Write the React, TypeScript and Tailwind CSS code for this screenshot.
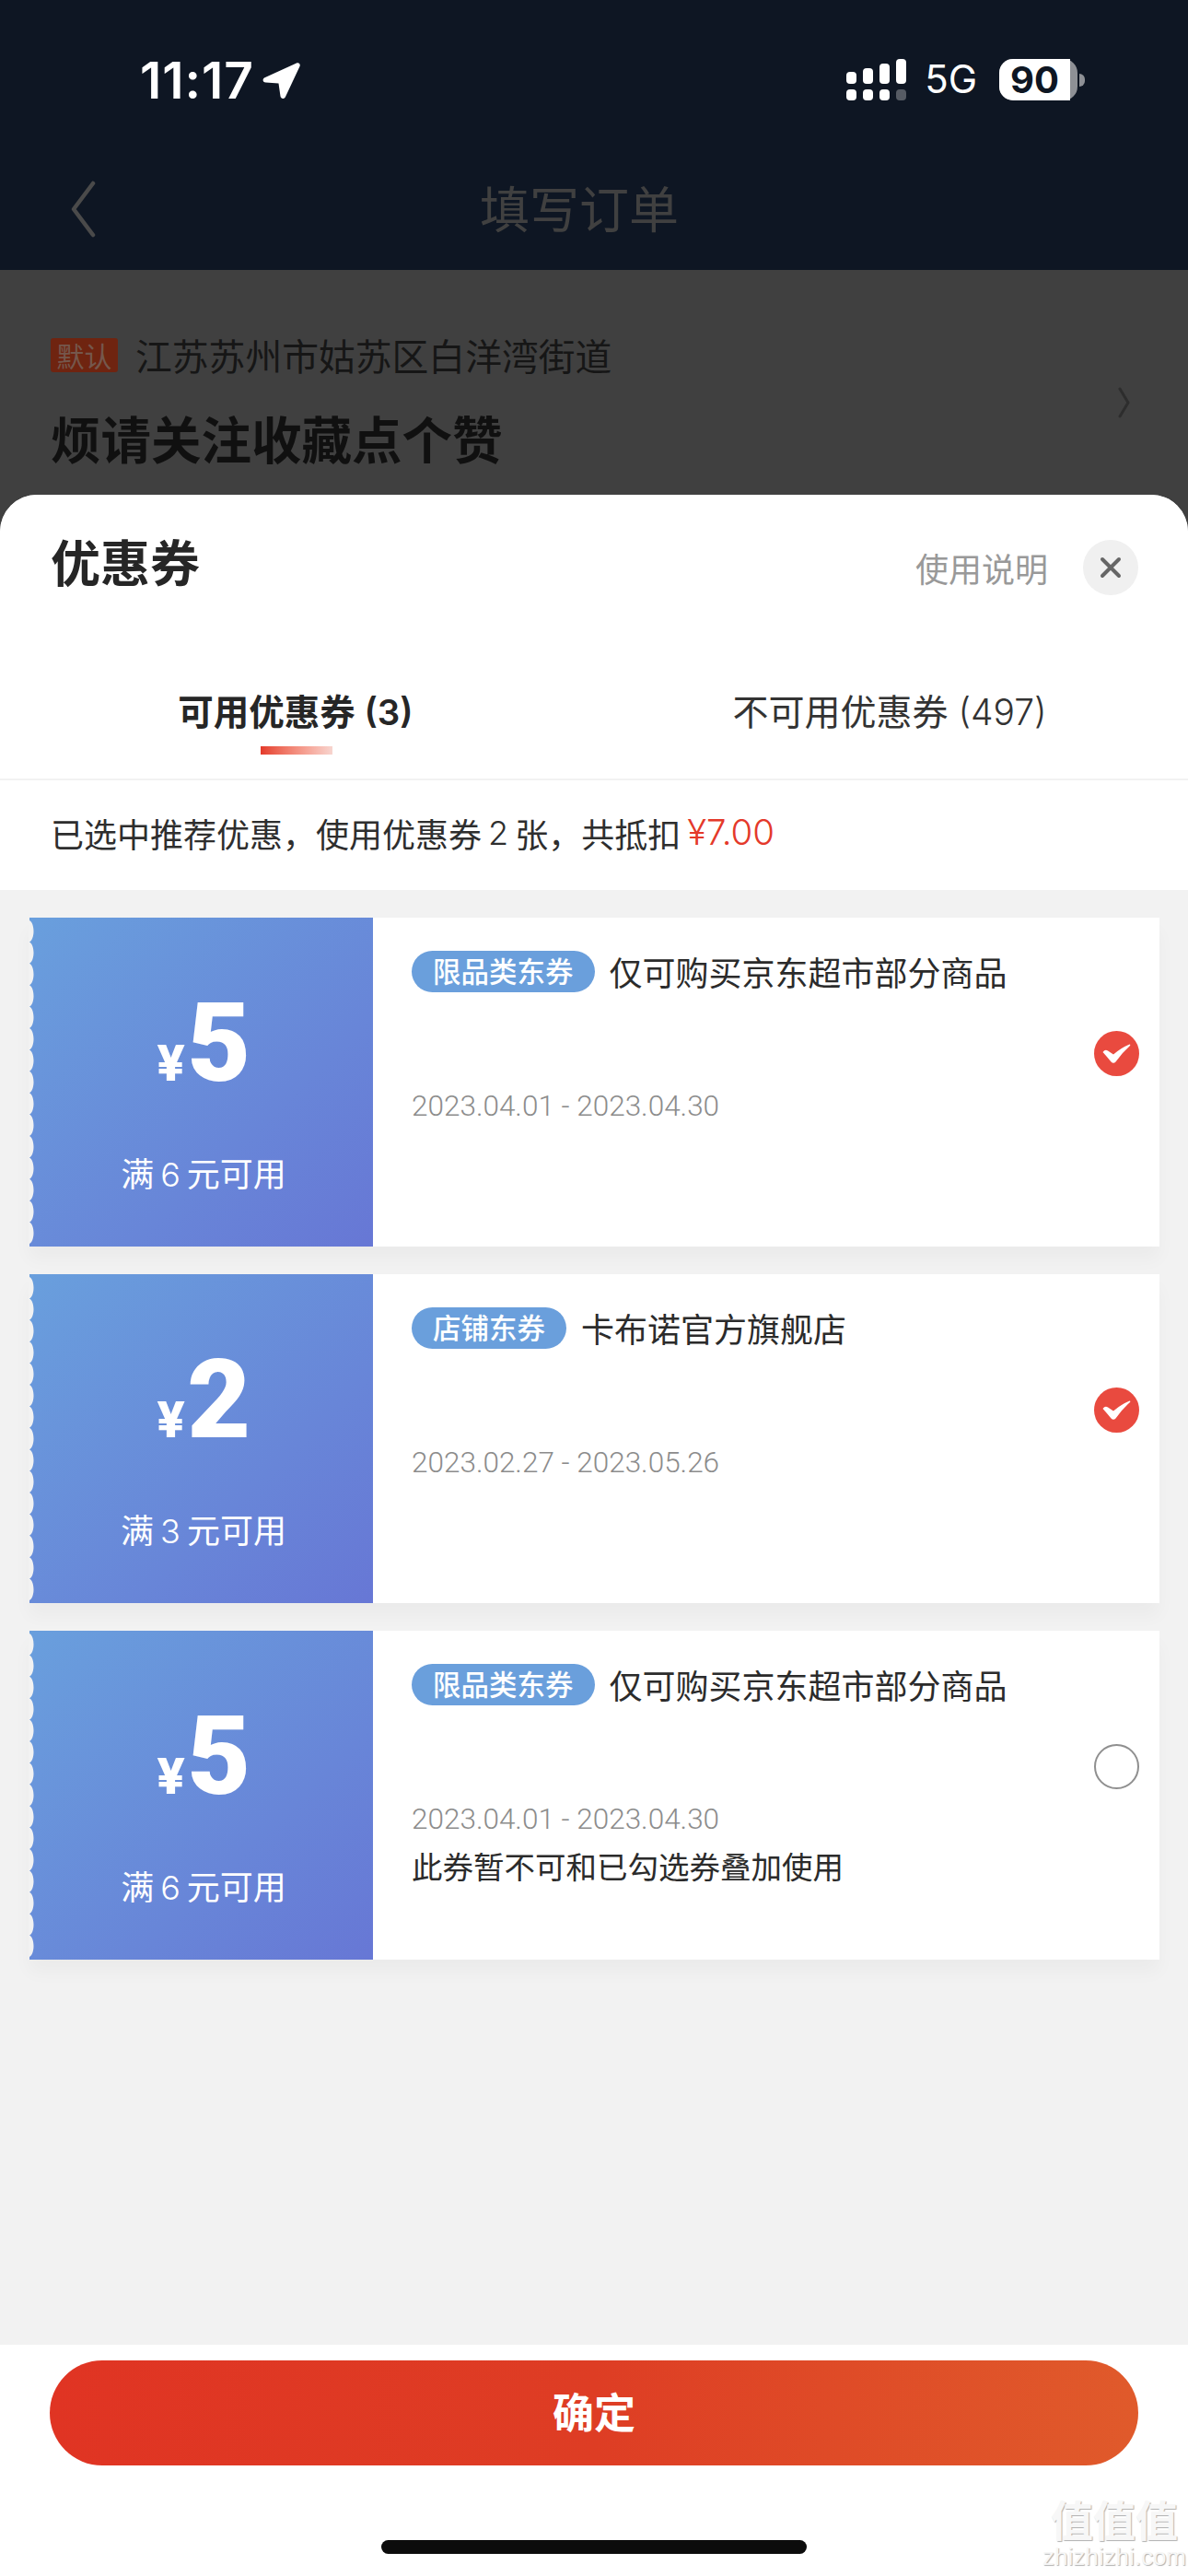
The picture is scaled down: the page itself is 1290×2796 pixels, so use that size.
const cjk = "font-['Noto_Sans_CJK_SC','Noto_Sans',sans-serif]";

interface Coupon {
  amount: string;
  limit: string;
  tag: string;
  title: string;
  date: string;
  note?: string;
  checked: boolean;
}

const coupons: Coupon[] = [
  { amount: '5', limit: '6', tag: '限品类东券', title: '仅可购买京东超市部分商品', date: '2023.04.01 - 2023.04.30', checked: true },
  { amount: '2', limit: '3', tag: '店铺东券', title: '卡布诺官方旗舰店', date: '2023.02.27 - 2023.05.26', checked: true },
  { amount: '5', limit: '6', tag: '限品类东券', title: '仅可购买京东超市部分商品', date: '2023.04.01 - 2023.04.30', note: '此券暂不可和已勾选券叠加使用', checked: false },
];

// the torn left edge of a coupon: grey lobes biting into the blue panel
function ScallopEdge() {
  const period = 23.4;
  let d = 'M0 0 L1 0';
  for (let i = 0; i < 15; i++) {
    const y = 3 + i * period;
    d += ` L1 ${y} C7 ${y + 3} 7 ${y + period - 3} 1 ${y + period}`;
  }
  d += ' L1 357 L0 357 Z';
  return (
    <svg className="absolute left-0 top-0" width="7" height="357" viewBox="0 0 7 357">
      <path d={d} fill="#f2f2f2" />
    </svg>
  );
}

function CouponCard({ coupon }: { coupon: Coupon }) {
  return (
    <div className="flex h-[357px] shadow-[0_14px_18px_rgba(0,0,0,0.03)]">
      <div className="relative flex w-[374px] flex-col items-center bg-gradient-to-br from-[#699fdd] to-[#6777d5] pl-[6px] text-white">
        <ScallopEdge />
        <div className="mt-[77px] flex h-[120px] items-baseline font-['Roboto',sans-serif] font-bold">
          <span className="font-['Inter',sans-serif] text-[54px] font-extrabold leading-none">¥</span>
          <span className="ml-[2px] text-[119px] font-black leading-none">{coupon.amount}</span>
        </div>
        <div className={`mt-[54px] text-[36px] leading-[50px] ${cjk}`}>
          满<span className="mx-[7px] font-['Inter',sans-serif] font-light">{coupon.limit}</span>元可用
        </div>
      </div>
      <div className="relative flex-1 bg-white pl-[42px]">
        <div className="mt-[35px] flex h-[46px] items-center">
          <span className={`flex h-[45px] items-center rounded-full bg-[#6a9fdc] px-[23px] text-[30.5px] font-medium text-white ${cjk}`}>
            {coupon.tag}
          </span>
          <span className={`ml-[16px] text-[36px] text-[#2b2b2b] ${cjk}`}>{coupon.title}</span>
        </div>
        <div className="mt-[101px] font-['Roboto',sans-serif] text-[31.5px] font-light leading-[46px] text-[#8c8c8c]">
          {coupon.date}
        </div>
        {coupon.note && (
          <div className={`mt-[1px] text-[33.5px] leading-[52px] text-[#2b2b2b] ${cjk}`}>{coupon.note}</div>
        )}
        <div className="absolute right-[22px] top-[123px]">
          {coupon.checked ? (
            <svg width="49" height="49" viewBox="0 0 49 49">
              <circle cx="24.5" cy="24.5" r="24.5" fill="#e94a3f" />
              <path d="M9.5 23 Q12 19.5 15 21.5 L21 25.5 Q29 18.5 38.5 14.5 Q40 14.5 39 16 Q30 24 23.5 33.5 Q21 36 18.5 33.5 Q14 28 9.5 23 Z" fill="#fff" />
            </svg>
          ) : (
            <div className="h-[49px] w-[49px] rounded-full border-2 border-[#8f8f8f] bg-white" />
          )}
        </div>
      </div>
    </div>
  );
}

export default function App() {
  return (
    <div className={`relative h-[2796px] w-[1290px] overflow-hidden bg-[#404040] ${cjk}`}>
      {/* Status bar + nav, dimmed by the sheet's backdrop */}
      <div className="h-[293px] bg-[#0e1623]">
        <div className="flex h-[172px] items-start justify-between pl-[152px] pr-[112px] pt-[64px]">
          <div className="flex items-center">
            <span className="font-['Inter',sans-serif] text-[55px] font-semibold leading-[46px] tracking-[1px] text-white">11:17</span>
            <svg className="ml-[9px]" width="42" height="41" viewBox="0 0 42 41">
              <path d="M3 17 L37 1.5 C39.5 0.5 41.5 2.5 40.5 5 L25 38 C23.5 41 20 40.5 19.5 37.5 L17.5 23.5 L3.5 22.5 C0 22 -0.5 18.5 3 17 Z" fill="#fff" />
            </svg>
          </div>
          <div className="flex items-start">
            <svg width="65" height="46" viewBox="0 0 65 46">
              <g fill="#fff">
                <rect x="0" y="14" width="11" height="13" rx="4" />
                <rect x="18" y="10" width="11" height="17" rx="4" />
                <rect x="36" y="5" width="11" height="22" rx="4" />
                <rect x="54" y="0" width="11" height="27" rx="4" />
                <rect x="0" y="33" width="11" height="12" rx="4" />
                <rect x="18" y="33" width="11" height="12" rx="4" />
                <rect x="36" y="33" width="11" height="12" rx="4" />
              </g>
              <rect x="54" y="33" width="11" height="12" rx="4" fill="#565b64" />
            </svg>
            <span className="ml-[20px] font-['Inter',sans-serif] text-[42px] font-normal leading-[44px] text-white">5G</span>
            <div className="ml-[24px] flex items-center">
              <div className="flex h-[45px] w-[85px] items-center rounded-[15px] bg-[#8e9095]">
                <div className="flex h-full w-[77px] items-center justify-center rounded-l-[15px] bg-white font-['Inter',sans-serif] text-[40px] font-bold leading-none text-[#0e1623]">90</div>
              </div>
              <div className="ml-[2px] h-[14px] w-[6px] rounded-r-full bg-[#8e9095]" />
            </div>
          </div>
        </div>
        <div className="relative flex h-[121px] items-start justify-center">
          <svg className="absolute left-[76px] top-[24px]" width="30" height="62" viewBox="0 0 30 62">
            <path d="M25 3 L4 31 L25 59" fill="none" stroke="#4a4a4a" strokeWidth="4.5" strokeLinecap="round" strokeLinejoin="round" />
          </svg>
          <span className="mr-[32px] mt-[18px] text-[54px] leading-[70px] text-[#404040]">填写订单</span>
        </div>
      </div>

      {/* Address behind the backdrop */}
      <div className="relative px-[55px] pt-[73px]">
        <div className="flex h-[38px] items-center">
          <span className="flex h-[37px] w-[73px] items-center justify-center rounded-[3px] bg-[#6f2410] text-[30px] leading-none text-[#75574c]">默认</span>
          <span className="ml-[19px] text-[39.8px] leading-none text-[#161616]">江苏苏州市姑苏区白洋湾街道</span>
        </div>
        <div className="mt-[33px] text-[54.5px] font-bold leading-[76px] text-[#101010]">烦请关注收藏点个赞</div>
        <svg className="absolute right-[62px] top-[127px]" width="14" height="34" viewBox="0 0 14 34">
          <path d="M2 2 L11 17 L2 32" fill="none" stroke="#2d2d2d" strokeWidth="3" strokeLinecap="round" strokeLinejoin="round" />
        </svg>
      </div>

      {/* Coupon sheet, lies over the page */}
      <div className="absolute inset-x-0 bottom-0 top-[537px] flex flex-col overflow-hidden rounded-t-[40px] bg-[#f2f2f2]">
        <div className="bg-white">
          <div className="flex h-[137px] items-center justify-between pb-[4px] pl-[55px] pr-[54px]">
            <span className="mt-[10px] text-[54px] font-bold leading-[76px] text-[#262626]">优惠券</span>
            <div className="mt-[24px] flex items-center">
              <span className="text-[36px] leading-[50px] text-[#999999]">使用说明</span>
              <span className="ml-[38px] flex h-[60px] w-[60px] items-center justify-center rounded-full bg-[#f0f0f0]">
                <svg width="26" height="26" viewBox="0 0 26 26">
                  <path d="M4 4 L22 22 M22 4 L4 22" stroke="#666" strokeWidth="4" strokeLinecap="round" />
                </svg>
              </span>
            </div>
          </div>
          <div className="relative flex h-[173px] border-b-2 border-[#f2f2f2]">
            <div className="flex w-[642px] justify-center pt-[68px]">
              <span className="text-[38.5px] font-bold leading-[56px] text-[#262626]">可用优惠券<span className="font-['Inter',sans-serif] font-semibold"> (3)</span></span>
            </div>
            <div className="flex flex-1 justify-center pt-[68px]">
              <span className="text-[39px] leading-[56px] text-[#333333]">不可用优惠券<span className="font-['Inter',sans-serif] font-light"> (497)</span></span>
            </div>
            <div className="absolute left-[283px] top-[136px] h-[9px] w-[78px] bg-gradient-to-r from-[#e4392a] to-[#f7d5cf]" />
          </div>
          <div className="flex h-[119px] items-center pb-[6px] pl-[55px] text-[36px] text-[#2e2e2e]">
            已选中推荐优惠，使用优惠券<span className="mx-[7px] font-['Inter',sans-serif] font-light">2</span>张，共抵扣
            <span className="ml-[7px] font-['Inter',sans-serif] text-[38.5px] font-light text-[#e4392a]">¥7.00</span>
          </div>
        </div>

        <div className="flex flex-1 flex-col gap-[30px] px-[31px] pt-[30px]">
          {coupons.map((coupon, index) => (
            <CouponCard key={index} coupon={coupon} />
          ))}
        </div>

        <div className="relative h-[251px] bg-white pt-[17px]">
          <button className="mx-auto flex h-[114px] w-[1182px] items-center justify-center rounded-full bg-gradient-to-r from-[#e03423] via-[#de3d24] to-[#e05a2b] pb-[4px] text-[45px] font-bold text-white">
            确定
          </button>
          <div className="mx-auto mt-[81px] h-[15px] w-[462px] rounded-full bg-[#0c0c0c]" />
        </div>
      </div>

      {/* Site watermark */}
      <div className="absolute bottom-[8px] right-[7px] flex w-[146px] flex-col items-center gap-[6px] text-[#f7f7f7]">
        <span className="text-[46px] font-bold leading-[46px] [text-shadow:1px_1px_1px_#b0b0b0]">值值值</span>
        <span className="font-['Liberation_Sans',sans-serif] text-[26px] leading-[26px] [text-shadow:1px_1px_1px_#b0b0b0]">zhizhizhi.com</span>
      </div>
    </div>
  );
}
